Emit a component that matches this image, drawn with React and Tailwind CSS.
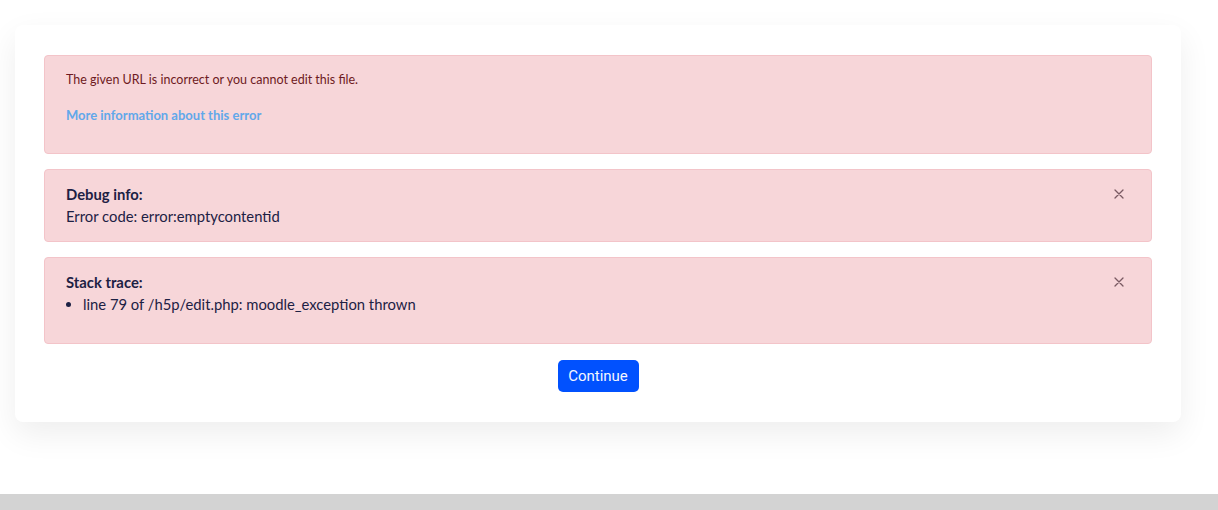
function CloseIcon() {
  return (
    <svg width="10" height="10" viewBox="0 0 10 10" className="text-[#7a5a62]">
      <path d="M1 1L9 9M9 1L1 9" stroke="currentColor" strokeWidth="1.3" strokeLinecap="round" />
    </svg>
  );
}

export default function App() {
  return (
    <div className="h-[510px] overflow-hidden bg-white font-['Lato',sans-serif]">
      <div className="pl-[15px] pr-[37px] pt-[25px]">
        <div className="rounded-lg bg-white px-[29px] pt-[30px] pb-[30px] shadow-[0_12px_32px_rgba(0,0,0,0.07)]">
          <div className="rounded-[4px] border border-[#f3c4c9] bg-[#f7d6d9] px-[21px] pt-[14px] pb-[28px]">
            <p className="text-[12.5px] leading-[20px] text-[#6e1a22]">
              The given URL is incorrect or you cannot edit this file.
            </p>
            <p className="mt-[15px] text-[13px] leading-[20px] font-bold text-[#62a8ea]">
              More information about this error
            </p>
          </div>

          <div className="mt-[15px] flex items-start justify-between rounded-[4px] border border-[#f3c4c9] bg-[#f7d6d9] pl-[21px] pr-[27px] pt-[13px] pb-[14px] text-[14.8px] leading-[22px] text-[#1d2144]">
            <div>
              <p className="font-bold">Debug info:</p>
              <p>Error code: error:emptycontentid</p>
            </div>
            <button className="mt-[6px]">
              <CloseIcon />
            </button>
          </div>

          <div className="mt-[15px] flex items-start justify-between rounded-[4px] border border-[#f3c4c9] bg-[#f7d6d9] pl-[21px] pr-[27px] pt-[13px] pb-[28px] text-[14.8px] leading-[22px] text-[#1d2144]">
            <div>
              <p className="font-bold">Stack trace:</p>
              <ul className="list-disc pl-[17px]">
                <li>line 79 of /h5p/edit.php: moodle_exception thrown</li>
              </ul>
            </div>
            <button className="mt-[6px]">
              <CloseIcon />
            </button>
          </div>

          <div className="mt-[16px] flex justify-center">
            <button className="h-[32px] w-[81px] rounded-[5px] bg-[#0151fe] font-['Roboto',sans-serif] text-[15px] text-[#f4f6ff]">
              Continue
            </button>
          </div>
        </div>
      </div>
      <footer className="mt-[72px] h-[60px] bg-[#d3d3d3]" />
    </div>
  );
}
